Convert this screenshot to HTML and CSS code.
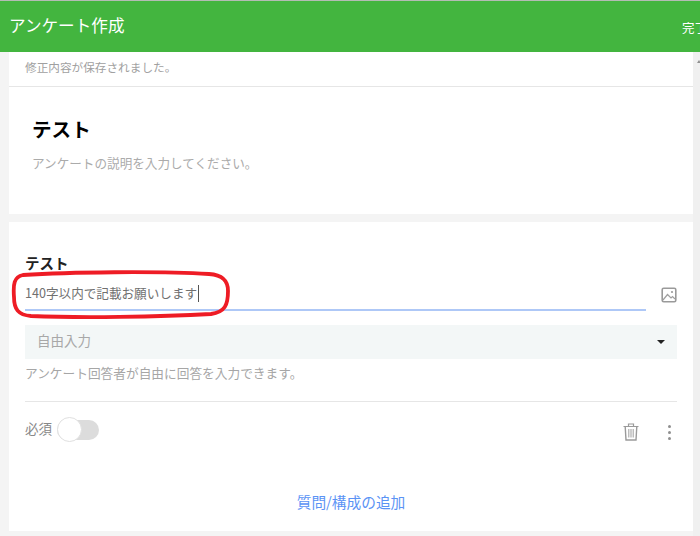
FILE: index.html
```html
<!DOCTYPE html>
<html lang="ja">
<head>
<meta charset="utf-8">
<title>アンケート作成</title>
<link rel="stylesheet" href="styles.css">
</head>
<body>
<div class="topline"></div>
<header class="bar">
  <span class="bar-title">アンケート作成</span>
  <span class="bar-done">完了</span>
</header>
<div class="shell">
  <main class="main">
    <section class="card card-intro">
      <div class="notice">修正内容が保存されました。</div>
      <div class="intro">
        <h1 class="intro-title">テスト</h1>
        <p class="intro-desc">アンケートの説明を入力してください。</p>
      </div>
    </section>
    <section class="card card-question">
      <h2 class="q-title">テスト</h2>
      <div class="q-input-row">
        <div class="q-input"><span>140字以内で記載お願いします</span><i class="caret"></i></div>
        <svg class="icon-image" width="16" height="16" viewBox="0 0 16 16" aria-hidden="true">
          <rect x="1.2" y="1.2" width="13.6" height="13.6" rx="1.5" fill="none" stroke="#9a9a9a" stroke-width="1.6"/>
          <path d="M2 13 L6.5 7.5 L10 11 L11.5 9.5 L14 12" fill="none" stroke="#a0a0a0" stroke-width="1.2"/>
          <circle cx="11" cy="5" r="1.1" fill="#9a9a9a"/>
        </svg>
      </div>
      <div class="q-select"><span class="q-select-label">自由入力</span><i class="arrow"></i></div>
      <p class="q-help">アンケート回答者が自由に回答を入力できます。</p>
      <div class="q-tools">
        <div class="required">
          <span>必須</span>
          <div class="toggle"><i class="knob"></i></div>
        </div>
        <div class="actions">
          <svg class="icon-trash" width="16" height="18" viewBox="0 0 16 18" aria-hidden="true">
            <path d="M0.5 3.5 H15.5 M5.5 3.5 V1 H10.5 V3.5" fill="none" stroke="#9a9a9a" stroke-width="1.2"/>
            <path d="M2.2 3.5 L3 17 H13 L13.8 3.5" fill="none" stroke="#9a9a9a" stroke-width="1.4"/>
            <path d="M5.8 6 V14.5 M8 6 V14.5 M10.2 6 V14.5" fill="none" stroke="#a6a6a6" stroke-width="1.1"/>
          </svg>
          <div class="dots"><i></i><i></i><i></i></div>
        </div>
      </div>
      <div class="add"><a class="add-link">質問/構成の追加</a></div>
    </section>
  </main>
  <div class="scroll"><i class="scroll-up"></i></div>
</div>
<svg class="annotation" width="222" height="50" viewBox="0 0 222 50" aria-hidden="true">
  <path d="M14 5 C60 2 150 1 200 4 C214 5 219 11 219 21 C219 35 216 42 202 44 C150 47 70 48 22 46 C9 45 5 39 5 27 C4 14 5 7 14 5 Z" fill="none" stroke="#ee1c25" stroke-width="3.8"/>
</svg>
</body>
</html>
```
FILE: styles.css
```css
* { box-sizing: border-box; }
html, body { margin: 0; padding: 0; }
body {
  position: relative;
  width: 700px;
  height: 536px;
  overflow: hidden;
  background: #f4f4f4;
  font-family: "Noto Sans CJK JP", "Noto Sans", sans-serif;
  font-weight: 400;
  color: #999;
}
.topline { height: 1px; background: #b4bcb4; }
.bar {
  height: 51px;
  background: #43b53f;
  color: #fff;
  display: flex;
  align-items: center;
  justify-content: space-between;
  padding: 0 0 0 9px;
  overflow: hidden;
  white-space: nowrap;
}
.bar-title { font-size: 16.6px; line-height: 24px; margin-top: -3px; }
.bar-done { font-size: 12.5px; width: 18px; overflow: hidden; flex: none; margin-top: 1px; }
.shell { display: flex; height: 484px; }
.main { width: 693px; padding-left: 9px; }
.scroll { width: 7px; background: #f0f0f0; position: relative; }
.scroll-up {
  position: absolute; left: 4px; top: 8px;
  border-left: 2px solid transparent; border-right: 2px solid transparent;
  border-bottom: 3px solid #909090;
}
.card { background: #fff; }
.card-intro { height: 162px; margin-bottom: 8px; }
.notice {
  height: 35px;
  padding: 6px 0 0 16px;
  font-size: 11.65px;
  line-height: 18px;
  color: #a0a0a0;
  border-bottom: 1px solid #e6e6e6;
}
.intro { padding: 27px 23px 0; }
.intro-title { margin: 0; font-size: 19.6px; line-height: 30px; font-weight: 700; color: #000; }
.intro-desc { margin: 9px 0 0; font-size: 12.6px; line-height: 20px; color: #ababab; }
.card-question { height: 309px; padding: 31px 16px 0; }
.q-title { margin: 0; font-size: 14.5px; line-height: 20px; font-weight: 700; color: #222; }
.q-input-row { display: flex; align-items: flex-start; height: 52px; padding-top: 1px; }
.q-input {
  width: 621px;
  height: 37px;
  padding-top: 3px;
  border-bottom: 2px solid #aec8f7;
  font-size: 12.6px;
  line-height: 24px;
  color: #707070;
  display: flex;
  align-items: center;
  white-space: nowrap;
}
.caret { width: 1px; height: 17px; background: #555; margin-left: 1px; }
.icon-image { margin: 13px 0 0 15px; flex: none; }
.q-select {
  width: 652px;
  height: 34px;
  background: #f3f7f7;
  display: flex;
  align-items: center;
  justify-content: space-between;
  padding: 0 12px;
  font-size: 13.5px;
  line-height: 20px;
  color: #a8a8a8;
}
.q-select-label { margin-top: -5px; }
.arrow {
  border-left: 4px solid transparent; border-right: 4px solid transparent;
  border-top: 4px solid #222;
}
.q-help { margin: 4px 0 0; font-size: 12.7px; line-height: 20px; color: #a6a6a6; }
.q-tools {
  margin-top: 18px;
  width: 652px;
  border-top: 1px solid #e6e6e6;
  padding-top: 18px;
  display: flex;
  justify-content: space-between;
  align-items: flex-start;
}
.required { display: flex; align-items: center; font-size: 13.5px; color: #888; gap: 4px; }
.required span { margin-top: -4px; }
.toggle { position: relative; width: 42px; height: 20px; border-radius: 10px; background: #dcdcdc; margin-left: 1px; }
.knob {
  position: absolute; left: 0; top: -3px;
  width: 25px; height: 25px; border-radius: 50%;
  background: #fff; border: 1px solid #e0e0e0;
}
.actions { display: flex; align-items: flex-start; gap: 29px; padding-right: 6px; }
.icon-trash { margin-top: 3px; display: block; }
.dots { display: flex; flex-direction: column; gap: 3px; margin-top: 5px; }
.dots i { display: block; width: 3px; height: 3px; border-radius: 50%; background: #8f8f8f; }
.add { text-align: center; margin-top: 50px; font-size: 14.7px; line-height: 22px; }
.add-link { color: #5b93f5; }
.annotation { position: absolute; left: 9px; top: 270px; }
```
